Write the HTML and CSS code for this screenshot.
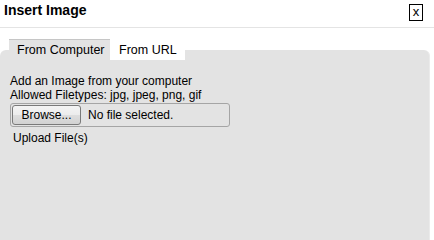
FILE: index.html
```html
<!DOCTYPE html>
<html>
<head>
<meta charset="utf-8">
<link rel="stylesheet" href="styles.css">
</head>
<body>
<div class="dialog">
  <div class="header">
    <h1 class="title">Insert Image</h1>
    <button class="close" type="button">x</button>
  </div>
  <div class="panel">
    <div class="tabs">
      <div class="tab tab-active">From Computer</div>
      <div class="tab tab-other">From URL</div>
    </div>
    <div class="content">
      <div class="line">Add an Image from your computer</div>
      <div class="line">Allowed Filetypes: jpg, jpeg, png, gif</div>
      <div class="filebox">
        <span class="browse">Browse...</span>
        <span class="nofile">No file selected.</span>
      </div>
      <div class="upload">Upload File(s)</div>
    </div>
  </div>
</div>
</body>
</html>
```
FILE: styles.css
```css
html, body {
  margin: 0;
  padding: 0;
  background: #ffffff;
}
body {
  font-family: "Liberation Sans", Arial, sans-serif;
  color: #000;
}
.dialog {
  display: flex;
  flex-direction: column;
  height: 100vh;
  width: 434px;
}
.header {
  display: flex;
  justify-content: space-between;
  align-items: flex-start;
  height: 25px;
  padding: 2px 11px 0 4px;
  border-bottom: 1px solid #e4e4e4;
}
.title {
  margin: 0;
  font-size: 14px;
  line-height: 17px;
  font-weight: bold;
}
.close {
  display: flex;
  align-items: center;
  justify-content: center;
  margin: 2px 0 0 0;
  width: 14px;
  height: 17px;
  padding: 0 0 2px 0;
  border: 1px solid #000;
  background: #fff;
  font-family: "Liberation Sans", Arial, sans-serif;
  font-size: 13px;
  line-height: 13px;
  color: #000;
  border-radius: 0;
}
.panel {
  flex: 1;
  display: flex;
  flex-direction: column;
  margin-top: 22px;
  margin-right: 4px;
  background: #e3e3e3;
  border-radius: 6px 6px 0 0;
  border-right: 1px solid #ebebeb;
}
.tabs {
  display: flex;
  margin-top: -11px;
  padding-left: 9px;
}
.tab {
  height: 20px;
  line-height: 20px;
  font-size: 12.5px;
  border-top: 1px solid transparent;
  box-sizing: content-box;
}
.tab-active {
  width: 93px;
  padding-left: 8px;
  background: #e3e3e3;
  border-top-color: #c6c6c6;
}
.tab-other {
  width: 66px;
  padding-left: 9px;
  background: #ffffff;
}
.content {
  padding: 14px 0 0 10px;
  font-size: 12px;
  line-height: 14px;
}
.filebox {
  display: flex;
  align-items: center;
  width: 216px;
  height: 20px;
  margin-top: 1px;
  padding: 1px;
  border: 1px solid #a5a5a5;
  border-radius: 3px;
  background: #e3e3e3;
}
.browse {
  box-sizing: border-box;
  width: 69px;
  height: 20px;
  border: 1px solid #7a7a7a;
  border-radius: 3px;
  background: linear-gradient(#f4f4f4, #ececec 50%, #dedede 50%, #d2d2d2);
  text-align: center;
  line-height: 18px;
  font-size: 12px;
}
.nofile {
  margin-left: 7px;
  font-size: 12px;
}
.upload {
  margin: 4px 0 0 3px;
}
```
